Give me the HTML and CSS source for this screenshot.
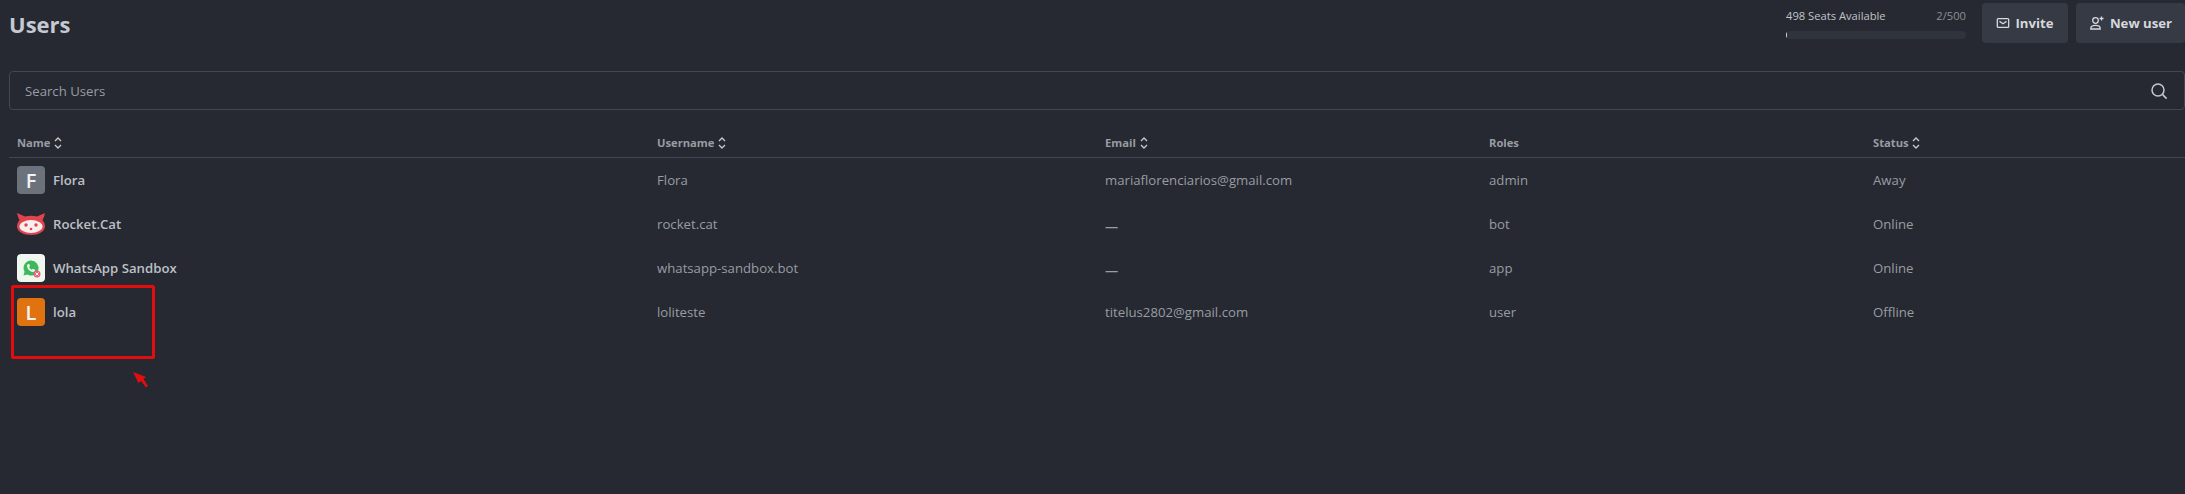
FILE: index.html
```html
<!DOCTYPE html>
<html lang="en">
<head>
    <meta charset="UTF-8">
    <title>Users</title>
    <link rel="stylesheet" href="styles.css">
</head>
<body>
    <header class="topbar">
        <h1>Users</h1>
        <div class="actions">
            <div class="seats">
                <div class="seats-text"><span>498 Seats Available</span><span class="seats-count">2/500</span></div>
                <div class="seats-bar"><div class="seats-fill" style="width: 0.4%"></div></div>
            </div>
            <button class="btn btn-invite">
                <svg width="14" height="14" viewBox="0 0 16 16" fill="none" stroke="currentColor" stroke-width="1.5"><rect x="1.500" y="3" width="13" height="10" rx="1"/><path d="M4 6.200l4 2.600 4-2.600"/></svg>
                Invite
            </button>
            <button class="btn btn-new">
                <svg width="16" height="16" viewBox="0 0 16 16" fill="none" stroke="currentColor" stroke-width="1.3"><circle cx="6.500" cy="5.500" r="2.800"/><path d="M1.800 14v-.6c0-2 1.600-3.100 4.700-3.100s4.700 1.100 4.700 3.100v.6z"/><path d="M12.500 1.500v4M10.500 3.500h4"/></svg>
                New user
            </button>
        </div>
    </header>

    <div class="search">
        <span>Search Users</span>
        <svg width="20" height="20" viewBox="0 0 20 20" fill="none" stroke="currentColor" stroke-width="1.5"><circle cx="9" cy="9" r="6"/><path d="M13.400 13.400l4.200 4.200"/></svg>
    </div>

    <div class="users">
        <div class="row head">
            <div>Name <svg class="sort" width="8" height="14" viewBox="0 0 8 14" fill="none" stroke="currentColor" stroke-width="1.400"><path d="M1 5l3-3 3 3M1 9l3 3 3-3"/></svg></div>
            <div>Username <svg class="sort" width="8" height="14" viewBox="0 0 8 14" fill="none" stroke="currentColor" stroke-width="1.400"><path d="M1 5l3-3 3 3M1 9l3 3 3-3"/></svg></div>
            <div>Email <svg class="sort" width="8" height="14" viewBox="0 0 8 14" fill="none" stroke="currentColor" stroke-width="1.400"><path d="M1 5l3-3 3 3M1 9l3 3 3-3"/></svg></div>
            <div>Roles</div>
            <div>Status <svg class="sort" width="8" height="14" viewBox="0 0 8 14" fill="none" stroke="currentColor" stroke-width="1.400"><path d="M1 5l3-3 3 3M1 9l3 3 3-3"/></svg></div>
        </div>

        <div class="row">
            <div class="user"><span class="avatar avatar-grey">F</span><b>Flora</b></div>
            <div>Flora</div>
            <div>mariaflorenciarios@gmail.com</div>
            <div>admin</div>
            <div>Away</div>
        </div>
        <div class="row">
            <div class="user">
                <svg class="avatar" width="28" height="28" viewBox="0 0 28 28">
                    <path fill="#e0454e" d="M0 3L8 6.500Q14 5 20 6.500L28 3Q27 8 25.500 10Q28 13 28 16C28 22 21 25 14 25S0 22 0 16Q0 13 2.500 10Q1 8 0 3z"/>
                    <ellipse fill="#fbeeee" cx="14" cy="16.500" rx="11.500" ry="6.500"/>
                    <circle fill="#e0454e" cx="9" cy="15" r="1.700"/>
                    <circle fill="#e0454e" cx="19" cy="15" r="1.700"/>
                    <circle fill="#e0454e" cx="14" cy="19" r="1.300"/>
                </svg>
                <b>Rocket.Cat</b>
            </div>
            <div>rocket.cat</div>
            <div class="dash">—</div>
            <div>bot</div>
            <div>Online</div>
        </div>
        <div class="row">
            <div class="user">
                <svg class="avatar" width="28" height="28" viewBox="0 0 28 28">
                    <rect width="28" height="28" rx="3" fill="#eef8ef"/>
                    <path fill="#3cb95a" d="M14 6.500a7.500 7.500 0 0 0-6.400 11.300L6.500 21.500l3.800-1A7.500 7.500 0 1 0 14 6.500z"/>
                    <path fill="#eef8ef" d="M11.300 10c-.6 0-1.300.8-1.300 2 0 2.800 3.200 6 6 6 1.200 0 2-.7 2-1.400v-.9l-2.200-1-.9 1c-1.300-.5-2.300-1.500-2.800-2.800l1-.9-1-2z"/>
                    <circle cx="20" cy="20" r="3.500" fill="#ee5f7a"/>
                    <path stroke="#fff" stroke-width="1" d="M18.500 18.500l3 3M21.500 18.500l-3 3"/>
                </svg>
                <b>WhatsApp Sandbox</b>
            </div>
            <div>whatsapp-sandbox.bot</div>
            <div class="dash">—</div>
            <div>app</div>
            <div>Online</div>
        </div>
        <div class="row">
            <div class="user"><span class="avatar avatar-orange">L</span><b>lola</b></div>
            <div>loliteste</div>
            <div>titelus2802@gmail.com</div>
            <div>user</div>
            <div>Offline</div>
        </div>
    </div>

    <!-- annotation drawn over the screenshot -->
    <div class="mark-box"></div>
    <svg class="mark-arrow" width="18" height="18" viewBox="0 0 18 18"><path fill="#e30d0d" d="M1 1l13 5-2.500 2 4.500 7-2 1.500-5-6.500-2.500 2z"/></svg>
</body>
</html>
```
FILE: styles.css
```css
html, body {
    height: 100%;
}
body {
    background-color: #262931;
    color: #9ea2a8;
    font-family: "Open Sans", Arial, sans-serif;
    font-size: 13.2px;
    margin: 0;
    padding: 0 0 0 9px;
    overflow: hidden;
    box-sizing: border-box;
}
.topbar {
    display: flex;
    justify-content: space-between;
    height: 71px;
    box-sizing: border-box;
    padding-top: 3px;
}
.topbar h1 {
    margin: 6px 0 0;
    font-size: 22px;
    line-height: 30px;
    font-weight: 700;
    color: #c4c9d2;
}
.actions {
    display: flex;
    align-items: flex-start;
    gap: 8px;
}
.seats {
    width: 180px;
    margin-right: 8px;
    font-size: 11.2px;
    color: #c0c3c8;
}
.seats-text {
    display: flex;
    justify-content: space-between;
    line-height: 18px;
    margin-top: 4px;
}
.seats-count {
    color: #8b8f96;
}
.seats-bar {
    height: 8px;
    margin-top: 6px;
    background-color: #2f333c;
    border-radius: 4px;
    overflow: hidden;
}
.seats-fill {
    height: 100%;
    background-color: #d5d8dc;
}
.btn {
    display: flex;
    align-items: center;
    justify-content: center;
    gap: 5px;
    height: 40px;
    border: none;
    border-radius: 4px;
    background-color: #353a45;
    color: #d5d8dc;
    font-family: inherit;
    font-size: 13.2px;
    font-weight: 700;
    padding: 0;
}
.btn-invite {
    width: 86px;
}
.btn-new {
    width: 109px;
}
.search {
    display: flex;
    align-items: center;
    justify-content: space-between;
    box-sizing: border-box;
    height: 39px;
    padding: 0 15px;
    border: 1px solid #424751;
    border-radius: 4px;
    color: #989ca3;
}
.search svg {
    color: #c4c8cf;
}
.users {
    margin-top: 7px;
}
.row {
    display: grid;
    grid-template-columns: 640px 448px 384px 384px 1fr;
    align-items: center;
    height: 44px;
    padding-left: 8px;
    color: #989ca3;
}
.row.head {
    box-sizing: border-box;
    height: 41px;
    padding-top: 10px;
    border-bottom: 1px solid #424751;
    font-size: 11.2px;
    font-weight: 700;
    color: #989ca3;
}
.sort {
    vertical-align: -3px;
    margin-left: 1px;
    color: #c4c8cf;
}
.user {
    display: flex;
    align-items: center;
    gap: 8px;
}
.user b {
    font-weight: 600;
    color: #bcc0c7;
}
.avatar {
    display: flex;
    align-items: center;
    justify-content: center;
    width: 28px;
    height: 28px;
    border-radius: 4px;
    color: #f2f3f5;
    font-size: 20px;
    font-weight: 600;
}
.avatar-grey {
    background-color: #6c727c;
}
.avatar-orange {
    background-color: #e0730f;
}
.dash {
    font-weight: 700;
    padding-top: 4px;
}
.mark-box {
    position: absolute;
    left: 11px;
    top: 285px;
    width: 138px;
    height: 68px;
    border: 3px solid #e30d0d;
    border-radius: 2px;
}
.mark-arrow {
    position: absolute;
    left: 132px;
    top: 371px;
}
```
